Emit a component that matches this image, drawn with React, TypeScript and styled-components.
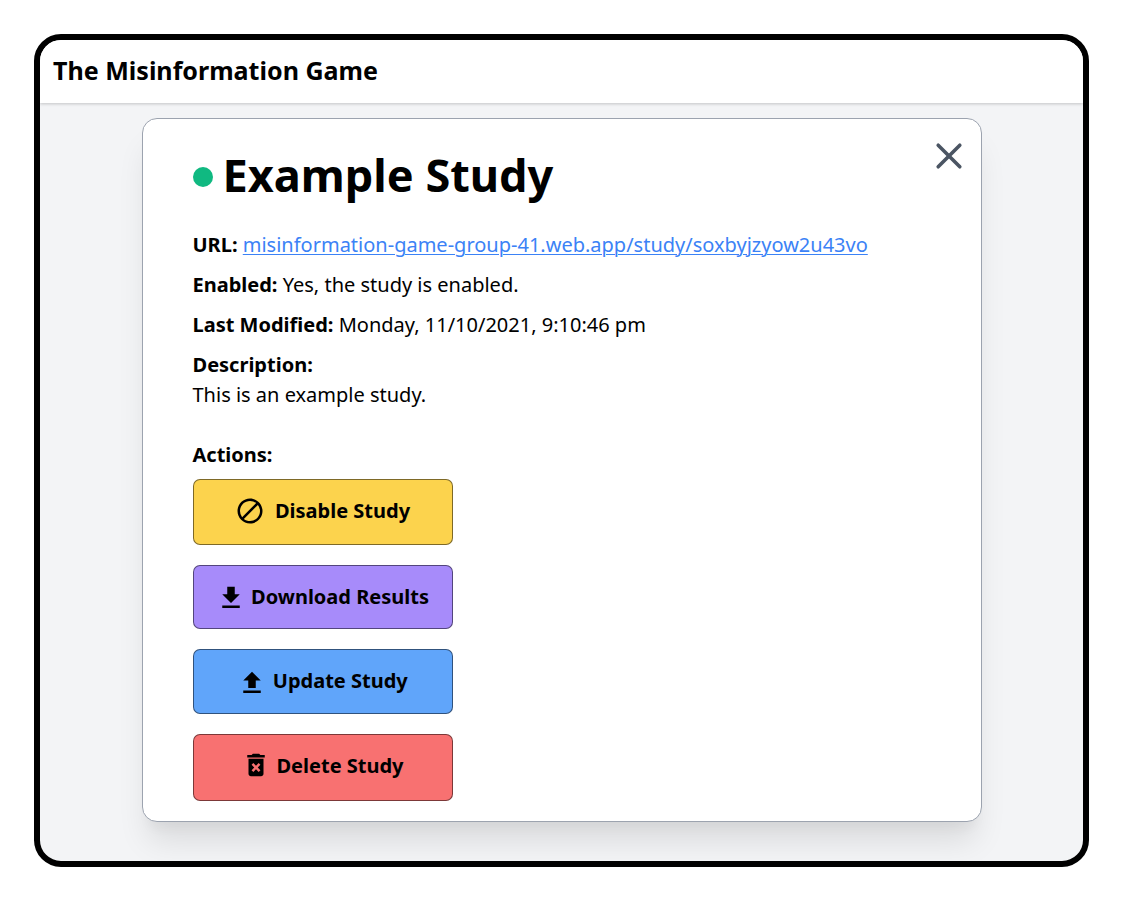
import React from "react";
import styled, { createGlobalStyle } from "styled-components";
import { MdBlock, MdFileDownload, MdFileUpload, MdDeleteForever } from "react-icons/md";

const Global = createGlobalStyle`
  * { box-sizing: border-box; }
  body { margin: 0; background: #fff; color: #000; font-family: "Noto Sans", sans-serif; }
`;
const Page = styled.div`
  height: 901px;
  padding: 34px;
`;
const Frame = styled.div`
  width: 1055px;
  height: 833px;
  border: 6px solid #000;
  border-radius: 27px;
  overflow: hidden;
  background: #f3f4f6;
  display: flex;
  flex-direction: column;
  align-items: center;
`;
const Header = styled.header`
  align-self: stretch;
  height: 63px;
  flex: none;
  padding-left: 13px;
  background: #fff;
  box-shadow: 0 1px 3px rgba(0, 0, 0, 0.2);
  font-size: 25.06px;
  font-weight: 700;
  line-height: 60px;
`;
const Card = styled.main`
  position: relative;
  width: 840px;
  height: 704px;
  margin-top: 15px;
  padding: 26px 50px 0;
  background: #fff;
  border: 1px solid #9ca3af;
  border-radius: 15px;
  box-shadow: 0 25px 31px -6px rgba(0, 0, 0, 0.1), 0 12px 12px -6px rgba(0, 0, 0, 0.04);
`;
const Close = styled.svg`
  position: absolute;
  top: 22px;
  right: 17px;
  width: 30px;
  height: 30px;
  stroke: #4b5563;
  stroke-width: 3.6;
`;
const Title = styled.h1`
  display: flex;
  align-items: center;
  gap: 10px;
  margin: 0 0 25px;
  font-size: 45.1px;
  font-weight: 700;
  line-height: 60px;
`;
const Dot = styled.span`
  width: 20px;
  height: 20px;
  margin-top: 3px;
  border-radius: 50%;
  background: #10b981;
`;
const Line = styled.p<{ $gap: number }>`
  margin: 0 0 ${(p) => p.$gap}px;
  font-size: 20px;
  line-height: 30px;
  b { font-weight: 700; }
`;
const Link = styled.a`
  color: #3b82f6;
  text-decoration: underline;
  text-decoration-thickness: 1px;
  text-underline-offset: 2px;
`;
const Actions = styled.div`
  display: flex;
  flex-direction: column;
  gap: 20px;
  width: 260px;
`;
const Button = styled.button<{ $bg: string; $h: number; $lift: number }>`
  display: flex;
  align-items: center;
  justify-content: center;
  height: ${(p) => p.$h}px;
  padding: 0 0 ${(p) => p.$lift}px;
  border: 1px solid rgba(0, 0, 0, 0.5);
  border-radius: 7px;
  background: ${(p) => p.$bg};
  color: #000;
  font: 700 20px "Noto Sans", sans-serif;
`;
const Icon = styled.span<{ $gap: number; $top?: number }>`
  display: flex;
  margin-right: ${(p) => p.$gap}px;
  margin-top: ${(p) => p.$top ?? 0}px;
  font-size: 30px;
`;

export default function App() {
  return (
    <Page>
      <Global />
      <Frame>
        <Header>The Misinformation Game</Header>
        <Card>
          <Close viewBox="0 0 30 30" strokeLinecap="round"><path d="M4.2 4.2L25.8 25.8M25.8 4.2L4.2 25.8" /></Close>
          <Title><Dot />Example Study</Title>
          <Line $gap={10}><b>URL:</b> <Link href="#">misinformation-game-group-41.web.app/study/soxbyjzyow2u43vo</Link></Line>
          <Line $gap={10}><b>Enabled:</b> Yes, the study is enabled.</Line>
          <Line $gap={10}><b>Last Modified:</b> Monday, 11/10/2021, 9:10:46 pm</Line>
          <Line $gap={0}><b>Description:</b></Line>
          <Line $gap={30}>This is an example study.</Line>
          <Line $gap={9}><b>Actions:</b></Line>
          <Actions>
            <Button $bg="#fcd34d" $h={66} $lift={3}><Icon $gap={10}><MdBlock /></Icon>Disable Study</Button>
            <Button $bg="#a78bfa" $h={64} $lift={2}><Icon $gap={5} $top={4}><MdFileDownload /></Icon>Download Results</Button>
            <Button $bg="#60a5fa" $h={65} $lift={2}><Icon $gap={5.6} $top={4}><MdFileUpload /></Icon>Update Study</Button>
            <Button $bg="#f87171" $h={67} $lift={4}><Icon $gap={5} $top={-1}><MdDeleteForever /></Icon>Delete Study</Button>
          </Actions>
        </Card>
      </Frame>
    </Page>
  );
}
